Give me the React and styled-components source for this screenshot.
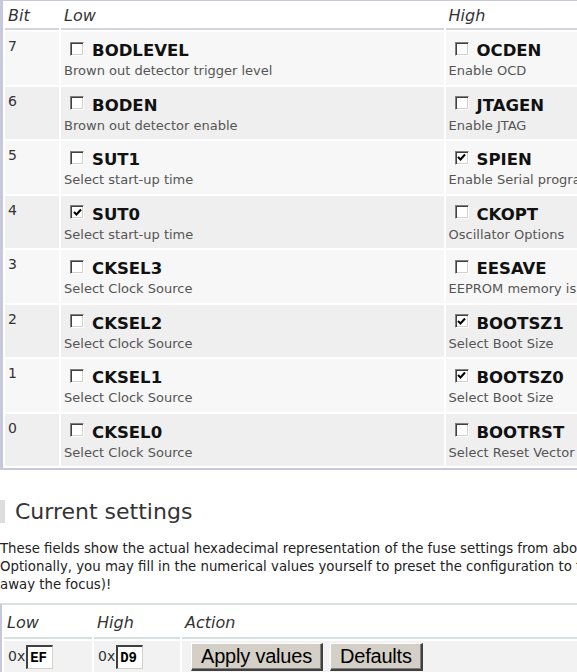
import React from 'react';
import styled, { createGlobalStyle } from 'styled-components';

const GlobalStyle = createGlobalStyle`
  html, body {
    margin: 0;
    padding: 0;
    background: #ffffff;
    overflow: hidden;
  }
  body {
    font-family: "DejaVu Sans", Verdana, sans-serif;
    color: #222;
  }
`;

const fuses = [
  { bit: 7, low: ['BODLEVEL', 'Brown out detector trigger level', false], high: ['OCDEN', 'Enable OCD', false] },
  { bit: 6, low: ['BODEN', 'Brown out detector enable', false], high: ['JTAGEN', 'Enable JTAG', false] },
  { bit: 5, low: ['SUT1', 'Select start-up time', false], high: ['SPIEN', 'Enable Serial programming and Data Downloading', true] },
  { bit: 4, low: ['SUT0', 'Select start-up time', true], high: ['CKOPT', 'Oscillator Options', false] },
  { bit: 3, low: ['CKSEL3', 'Select Clock Source', false], high: ['EESAVE', 'EEPROM memory is preserved through chip erase', false] },
  { bit: 2, low: ['CKSEL2', 'Select Clock Source', false], high: ['BOOTSZ1', 'Select Boot Size', true] },
  { bit: 1, low: ['CKSEL1', 'Select Clock Source', false], high: ['BOOTSZ0', 'Select Boot Size', true] },
  { bit: 0, low: ['CKSEL0', 'Select Clock Source', false], high: ['BOOTRST', 'Select Reset Vector', false] },
];

function Checkbox({ checked }) {
  return (
    <Box>
      {checked && (
        <svg width="9" height="9" viewBox="0 0 9 9">
          <path d="M1 4 L3.5 6.5 L8 1.5" fill="none" stroke="#000" strokeWidth="2" />
        </svg>
      )}
    </Box>
  );
}

function FuseCell({ fuse }) {
  const [name, desc, checked] = fuse;
  return (
    <Cell>
      <FuseName>
        <Checkbox checked={checked} />
        {name}
      </FuseName>
      <FuseDesc>{desc}</FuseDesc>
    </Cell>
  );
}

export default function App() {
  return (
    <Page>
      <GlobalStyle />
      <FuseTable>
        <colgroup>
          <col style={{ width: 54 }} />
          <col style={{ width: 382 }} />
          <col style={{ width: 382 }} />
        </colgroup>
        <thead>
          <tr>
            <HeadCell>Bit</HeadCell>
            <HeadCell>Low</HeadCell>
            <HeadCell>High</HeadCell>
          </tr>
        </thead>
        <tbody>
          {fuses.map((f, i) => (
            <Row key={f.bit} $odd={i % 2 === 1}>
              <BitCell>{f.bit}</BitCell>
              <FuseCell fuse={f.low} />
              <FuseCell fuse={f.high} />
            </Row>
          ))}
        </tbody>
      </FuseTable>

      <Heading>Current settings</Heading>
      <Intro>
        These fields show the actual hexadecimal representation of the fuse settings from above. Those are the values you have to program into your AVR device.
        <br />
        Optionally, you may fill in the numerical values yourself to preset the configuration to these values. Changes in the value fields are applied instantly (when taking
        <br />
        away the focus)!
      </Intro>

      <ValueTable>
        <colgroup>
          <col style={{ width: 88 }} />
          <col style={{ width: 86 }} />
          <col style={{ width: 560 }} />
        </colgroup>
        <thead>
          <tr>
            <HeadCell $tall $line="#d6e0e0">Low</HeadCell>
            <HeadCell $tall $line="#d6e0e0">High</HeadCell>
            <HeadCell $tall $line="#d6e0e0">Action</HeadCell>
          </tr>
        </thead>
        <tbody>
          <tr>
            <ValueCell>0x<HexInput defaultValue="EF" /></ValueCell>
            <ValueCell>0x<HexInput defaultValue="D9" /></ValueCell>
            <ValueCell>
              <Actions>
                <Button>Apply values</Button>
                <Button>Defaults</Button>
              </Actions>
            </ValueCell>
          </tr>
        </tbody>
      </ValueTable>
    </Page>
  );
}

const Page = styled.div`
  width: 860px;
`;

const FuseTable = styled.table`
  table-layout: fixed;
  width: 830px;
  border-collapse: separate;
  border-spacing: 2px 2px;
  border-left: 3px solid #c8c8dc;
  border-top: 1px solid #c8c8dc;
  border-bottom: 2px solid #c8c8dc;
  margin: 0;
  padding: 0;
`;

const HeadCell = styled.th`
  box-sizing: border-box;
  text-align: left;
  font-weight: normal;
  font-style: italic;
  font-size: 16px;
  color: #333;
  padding: ${p => (p.$tall ? '7px 3px 5px' : '4px 3px 3px')};
  line-height: 18px;
  border-bottom: 2px solid ${p => p.$line || '#d4d4e0'};
`;

const Row = styled.tr`
  background: ${p => (p.$odd ? '#efefef' : '#f7f7f7')};
  height: 52.5px;
`;

const BitCell = styled.td`
  box-sizing: border-box;
  vertical-align: top;
  font-size: 14px;
  color: #333;
  padding: 6px 3px;
`;

const Cell = styled.td`
  box-sizing: border-box;
  vertical-align: top;
  padding: 8px 3px 2px;
  white-space: nowrap;
  overflow: hidden;
`;

const FuseName = styled.div`
  display: flex;
  align-items: center;
  gap: 8px;
  padding-left: 6px;
  font-weight: bold;
  font-size: 16.5px;
  color: #111;
  line-height: 21px;
`;

const Box = styled.span`
  flex: none;
  box-sizing: border-box;
  width: 14px;
  height: 14px;
  display: inline-flex;
  align-items: center;
  justify-content: center;
  background: #fff;
  border-top: 1px solid #808080;
  border-left: 1px solid #808080;
  border-right: 1px solid #ffffff;
  border-bottom: 1px solid #ffffff;
  box-shadow: inset 1px 1px 0 #404040, inset -1px -1px 0 #d4d0c8;
  margin-top: -4px;
`;

const FuseDesc = styled.div`
  font-size: 13px;
  color: #555;
  line-height: 20px;
`;

const Heading = styled.h2`
  margin: 30px 0 0;
  padding-left: 10px;
  border-left: 5px solid #dddddd;
  font-size: 22px;
  font-weight: normal;
  color: #333;
  line-height: 23px;
`;

const Intro = styled.p`
  margin: 17px 0 0;
  font-size: 13.3px;
  line-height: 18px;
  color: #222;
  white-space: nowrap;
`;

const ValueTable = styled.table`
  table-layout: fixed;
  margin-top: 9px;
  width: 740px;
  border-collapse: separate;
  border-spacing: 2px 2px;
  border-left: 2px solid #c8c8dc;
  border-top: 2px solid #d6e0e0;
`;

const ValueCell = styled.td`
  box-sizing: border-box;
  background: #f2f2f2;
  font-size: 14px;
  color: #333;
  padding: 2px 4px 4px;
  white-space: nowrap;
`;

const HexInput = styled.input`
  box-sizing: border-box;
  width: 27px;
  height: 24px;
  margin: 0 0 0 1px;
  padding: 0 2px;
  font-family: "Liberation Mono", monospace;
  font-weight: bold;
  font-size: 14px;
  color: #000;
  background: #fff;
  border-top: 2px solid #404040;
  border-left: 2px solid #404040;
  border-right: 1px solid #d4d0c8;
  border-bottom: 1px solid #d4d0c8;
  vertical-align: middle;
`;

const Actions = styled.div`
  display: flex;
  gap: 7px;
  padding-left: 5px;
`;

const Button = styled.button`
  box-sizing: border-box;
  height: 28px;
  padding: 0 9px;
  font-family: "Liberation Sans", Arial, sans-serif;
  font-size: 20px;
  letter-spacing: -0.2px;
  color: #000;
  background: #d4d0c8;
  border-style: solid;
  border-width: 1px 2px 2px 1px;
  border-color: #ffffff #404040 #404040 #ffffff;
  box-shadow: inset -1px -1px 0 #808080;
`;
